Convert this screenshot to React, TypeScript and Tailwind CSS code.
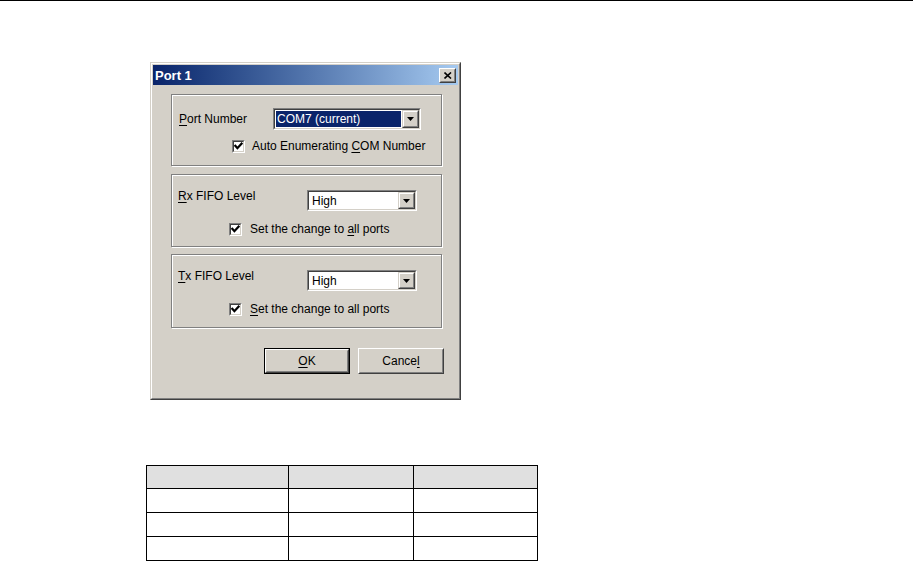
import React from "react";

const raisedOuter = "border border-t-[#d4d0c8] border-l-[#d4d0c8] border-b-[#404040] border-r-[#404040]";
const raisedInner = "border border-t-white border-l-white border-b-[#808080] border-r-[#808080]";
const btnOuter = "border border-t-white border-l-white border-b-[#404040] border-r-[#404040]";
const btnInner = "border border-t-[#d4d0c8] border-l-[#d4d0c8] border-b-[#808080] border-r-[#808080]";
const sunkenOuter = "border border-t-[#808080] border-l-[#808080] border-b-white border-r-white";
const sunkenInner = "border border-t-[#404040] border-l-[#404040] border-b-[#d4d0c8] border-r-[#d4d0c8]";

function DropArrow() {
  return (
    <div className={`w-[17px] h-full ${raisedOuter} bg-[#d4d0c8]`}>
      <div className={`w-full h-full ${raisedInner} flex items-center justify-center`}>
        <svg width="7" height="4" viewBox="0 0 7 4">
          <polygon points="0,0 7,0 3.5,4" fill="#000" />
        </svg>
      </div>
    </div>
  );
}

function Combo({ w, h, text, selected }: { w: string; h: string; text: string; selected?: boolean }) {
  return (
    <div className={`flex ${w} ${h} ${sunkenOuter}`}>
      <div className={`flex flex-1 ${sunkenInner} bg-white`}>
        <div className="flex flex-1 p-[1px]">
          {selected ? (
            <div className="flex flex-1 items-center bg-[#0a246a] text-white pl-[1px] text-[12px] leading-none">{text}</div>
          ) : (
            <div className="flex flex-1 items-center pl-[2px] text-[12px] leading-none text-black">{text}</div>
          )}
        </div>
        <DropArrow />
      </div>
    </div>
  );
}

function Check() {
  return (
    <div className={`w-[13px] h-[13px] ${sunkenOuter}`}>
      <div className={`w-full h-full ${sunkenInner} bg-white flex items-center justify-center`}>
        <svg width="9" height="9" viewBox="0 0 9 9">
          <polyline points="1.3,3.8 3.4,6.2 7.6,1.6" fill="none" stroke="#000" strokeWidth="2.2" strokeLinecap="square" />
        </svg>
      </div>
    </div>
  );
}

function U({ children }: { children: React.ReactNode }) {
  return <span className="underline underline-offset-[2px]">{children}</span>;
}

function Group({ h, children, className = "" }: { h: string; children: React.ReactNode; className?: string }) {
  return (
    <div className={`w-[271px] ${h} border border-[#808080] shadow-[1px_1px_0_#fff,inset_1px_1px_0_#fff] ${className}`}>
      {children}
    </div>
  );
}

function Button({ children, def }: { children: React.ReactNode; def?: boolean }) {
  const inner = (
    <div className={`w-full h-full ${btnOuter}`}>
      <div className={`w-full h-full ${btnInner} flex items-center justify-center text-[12px] text-black`}>
        {children}
      </div>
    </div>
  );
  return def ? (
    <div className="w-[86px] h-[26px] border border-black">{inner}</div>
  ) : (
    <div className="w-[86px] h-[26px]">{inner}</div>
  );
}

export default function App() {
  return (
    <div className="w-[913px] h-[561px] bg-white border-t border-black overflow-hidden font-['Liberation_Sans',Arial,sans-serif] text-black">
      {/* Dialog */}
      <div className={`ml-[150px] mt-[61px] w-[311px] h-[338px] bg-[#d4d0c8] ${raisedOuter}`}>
        <div className={`w-full h-full ${raisedInner} p-[1px] flex flex-col`}>
          <div className="h-[20px] flex items-center justify-between bg-linear-to-r from-[#0a246a] to-[#a6caf0] pl-[2px] pr-[2px]">
            <span className="text-white font-bold text-[13px] leading-none">Port 1</span>
            <div className={`w-[17px] h-[15px] bg-[#d4d0c8] ${btnOuter}`}>
              <div className={`w-full h-full ${btnInner} flex items-center justify-center`}>
                <svg width="8" height="7" viewBox="0 0 8 7">
                  <path d="M0.5 0.5 L7 6.5 M7 0.5 L0.5 6.5" stroke="#000" strokeWidth="1.6" />
                </svg>
              </div>
            </div>
          </div>
          <div className="flex flex-col pl-[18px] pt-[9px]">
            <Group h="h-[72px]" className="pt-[13px] pl-[7px]">
              <div className="flex items-center">
                <span className="w-[94px] text-[12px] leading-[14px]"><U>P</U>ort Number</span>
                <Combo w="w-[148px]" h="h-[22px]" text="COM7 (current)" selected />
              </div>
              <div className="flex items-center mt-[9px] pl-[53px] gap-[7px]">
                <Check />
                <span className="text-[12px] leading-[14px]">Auto Enumerating <U>C</U>OM Number</span>
              </div>
            </Group>
            <Group h="h-[73px]" className="mt-[8px] pt-[14px] pl-[6px]">
              <div className="flex items-start">
                <span className="w-[129px] text-[12px] leading-[14px]"><U>R</U>x FIFO Level</span>
                <div className="mt-[1px]"><Combo w="w-[110px]" h="h-[21px]" text="High" /></div>
              </div>
              <div className="flex items-center mt-[11px] pl-[51px] gap-[8px]">
                <Check />
                <span className="text-[12px] leading-[14px]">Set the change to <U>a</U>ll ports</span>
              </div>
            </Group>
            <Group h="h-[74px]" className="mt-[7px] pt-[14px] pl-[6px]">
              <div className="flex items-start">
                <span className="w-[129px] text-[12px] leading-[14px]"><U>T</U>x FIFO Level</span>
                <div className="mt-[1px]"><Combo w="w-[110px]" h="h-[21px]" text="High" /></div>
              </div>
              <div className="flex items-center mt-[11px] pl-[51px] gap-[8px]">
                <Check />
                <span className="text-[12px] leading-[14px]"><U>S</U>et the change to all ports</span>
              </div>
            </Group>
            <div className="w-[273px] flex justify-end gap-[8px] mt-[20px]">
              <Button def><span><U>O</U>K</span></Button>
              <Button><span>Cance<U>l</U></span></Button>
            </div>
          </div>
        </div>
      </div>

      {/* Table */}
      <table className="ml-[146px] mt-[65px] w-[391px] table-fixed border-collapse">
        <colgroup>
          <col className="w-[142px]" />
          <col className="w-[125px]" />
          <col className="w-[124px]" />
        </colgroup>
        <tbody>
          <tr className="h-[23px] bg-[#e0e0e0]">
            <td className="border border-black"></td>
            <td className="border border-black"></td>
            <td className="border border-black"></td>
          </tr>
          {[0, 1, 2].map((i) => (
            <tr key={i} className="h-[24px]">
              <td className="border border-black"></td>
              <td className="border border-black"></td>
              <td className="border border-black"></td>
            </tr>
          ))}
        </tbody>
      </table>
    </div>
  );
}
